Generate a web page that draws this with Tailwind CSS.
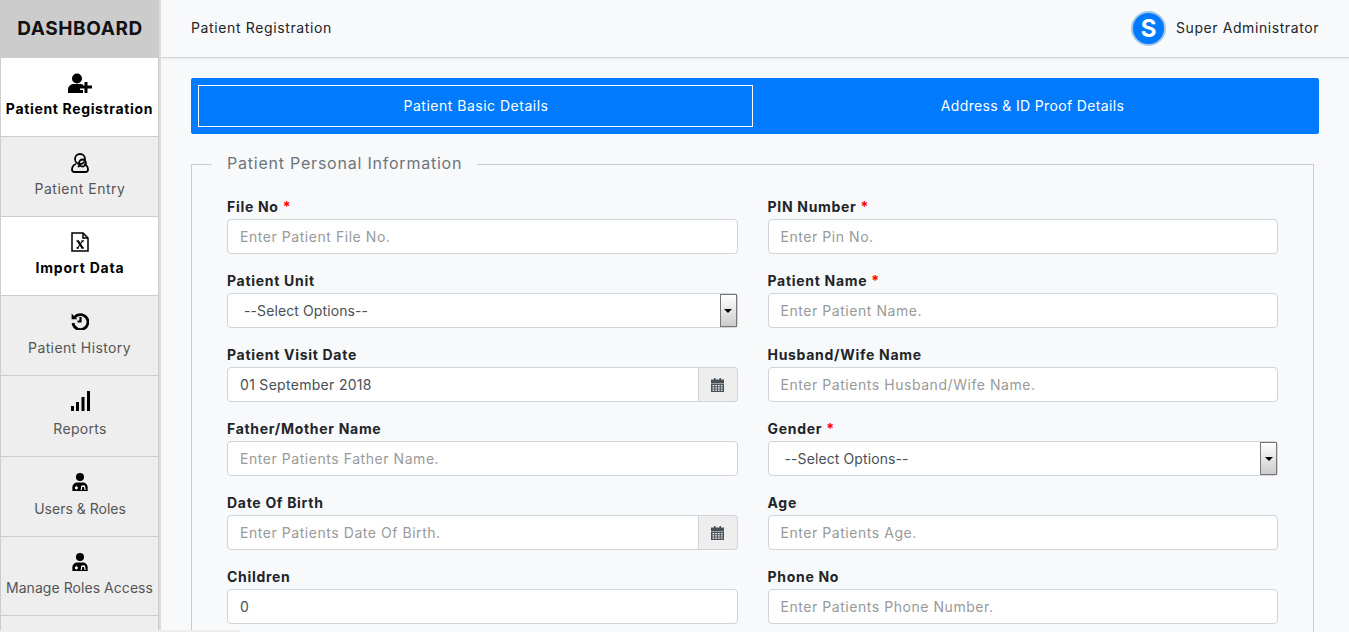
<!DOCTYPE html>
<html lang="en">
<head>
    <meta charset="UTF-8">
    <meta name="viewport" content="width=device-width, initial-scale=1.0">
    <title>Patient Registration</title>
    <script src="https://cdn.jsdelivr.net/npm/@tailwindcss/browser@4"></script>
</head>
<body class="h-[632px] overflow-hidden bg-[#f8f9fa] font-[Inter,sans-serif] text-[14px] tracking-[0.55px] text-[#212529]">
<div class="relative flex h-[632px] overflow-hidden">
    <!-- Sidebar -->
    <aside class="z-10 w-[161px] shrink-0 border-r-[2px] border-[#dcdcdc]">
        <div class="flex h-[58px] items-center justify-center bg-[#cccccc] pl-[1px] text-[19px] font-bold tracking-[0.6px] text-[#111]">DASHBOARD</div>
        <a class="flex h-[79px] flex-col items-center border-x border-b border-[#cccccc] bg-white pt-[15px] font-bold text-black">
            <svg class="h-[20px] w-[24px]" viewBox="0 0 24 20" fill="#000"><circle cx="9" cy="5.500" r="5"/><path d="M0 20v-3c0-3.500 2.500-6 5.500-6h7c1 0 1.800.2 2.500.6V13h-3v4h3v3z"/><path d="M16.500 9h3v3.500H24v3h-4.500V20h-3v-4.500H12v-3h4.500z"/></svg>
            <span class="mt-[7px] text-[14px] leading-[18px] tracking-[0.65px]">Patient Registration</span>
        </a>
        <a class="flex h-[80px] flex-col items-center border-x border-b border-[#cccccc] bg-[#eeeeee] pl-[1px] pt-[16px] text-[#555]">
            <svg class="h-[20px] w-[18px]" viewBox="0 0 18 20" fill="none" stroke="#000" stroke-width="1.800"><circle cx="9" cy="6" r="5"/><path d="M5 11c-2.500 1-4 3-4 5.500 0 1.500 1 2.500 2.500 2.500h11c1.500 0 2.500-1 2.500-2.500 0-2.500-1.500-4.500-4-5.500"/><circle cx="11.500" cy="10" r="3.500"/><path d="M7 14l2-2"/></svg>
            <span class="mt-[7px] leading-[18px] tracking-[0.5px]">Patient Entry</span>
        </a>
        <a class="flex h-[79px] flex-col items-center border-x border-b border-[#cccccc] bg-white pl-[1px] pt-[15px] font-bold tracking-[0.8px] text-black">
            <svg class="h-[20px] w-[18px]" viewBox="0 0 18 20" fill="none" stroke="#000" stroke-width="1.500"><path d="M1 1h11l5 5v13H1z"/><path d="M12 1v5h5"/><path d="M5.500 9h2.300M10.500 9h2.300M5.500 16h2.300M10.500 16h2.300M7 9l4.500 7" stroke-width="1.300"/><path d="M7 9l4.500 7" stroke-width="2.200"/><path d="M11.500 9l-5 7" stroke-width="1.200"/></svg>
            <span class="mt-[7px] leading-[18px]">Import Data</span>
        </a>
        <a class="flex h-[80px] flex-col items-center border-x border-b border-[#cccccc] bg-[#eeeeee] pt-[16px] tracking-[0.38px] text-[#555]">
            <svg class="h-[18px] w-[18px]" viewBox="0 0 18 18" fill="none" stroke="#000" stroke-width="2.800"><path d="M3.500 5.500A7.500 7.500 0 1 1 2 11"/><path d="M.6 1.500v5.700h5.700L.6 1.500z" fill="#000" stroke="none"/><path d="M9.500 5v4.500H6.500" stroke-width="2.200"/></svg>
            <span class="mt-[9px] leading-[18px]">Patient History</span>
        </a>
        <a class="flex h-[81px] flex-col items-center border-x border-b border-[#cccccc] bg-[#eeeeee] pl-[1px] pt-[15px] tracking-[0.3px] text-[#555]">
            <svg class="h-[20px] w-[19px]" viewBox="0 0 19 20" fill="#000"><path d="M0 15h3v5H0zM5 11h3v9H5zM10.500 6h3v14h-3zM16 0h3v20h-3z"/></svg>
            <span class="mt-[9px] leading-[18px]">Reports</span>
        </a>
        <a class="flex h-[80px] flex-col items-center border-x border-b border-[#cccccc] bg-[#eeeeee] pl-[1px] pt-[16px] tracking-[0px] text-[#555]">
            <svg class="h-[18px] w-[16px]" viewBox="0 0 17 20" fill="#000"><circle cx="8.500" cy="4.500" r="4.500"/><path d="M0 20v-4c0-3 2-5 4.500-5.500h8C15 11 17 13 17 16v4z"/><circle cx="4.500" cy="16.500" r="1.700" fill="#fff"/><path d="M10 14h4l.8 5h-1.300l-.5-3.500h-2L10.500 19H9.200z" fill="#fff"/></svg>
            <span class="mt-[9px] leading-[18px]">Users &amp; Roles</span>
        </a>
        <a class="flex h-[79px] flex-col items-center border-x border-b border-[#cccccc] bg-[#eeeeee] pt-[16px] tracking-[0.05px] text-[#555]">
            <svg class="h-[18px] w-[16px]" viewBox="0 0 17 20" fill="#000"><circle cx="8.500" cy="4.500" r="4.500"/><path d="M0 20v-4c0-3 2-5 4.500-5.500h8C15 11 17 13 17 16v4z"/><circle cx="4.500" cy="16.500" r="1.700" fill="#fff"/><path d="M10 14h4l.8 5h-1.300l-.5-3.500h-2L10.500 19H9.200z" fill="#fff"/></svg>
            <span class="mt-[8px] whitespace-nowrap leading-[18px]">Manage Roles Access</span>
        </a>
        <div class="h-[20px] border-x border-[#cccccc] bg-[#eeeeee]"></div>
    </aside>

    <div class="min-w-0 flex-1">
        <!-- Top bar -->
        <header class="flex h-[58px] items-center justify-between border-b border-[#d6d6d6] pl-[30px] pr-[30px] shadow-[0_1px_2px_rgba(0,0,0,0.08)]">
            <span class="pb-[2px] tracking-[0.63px]">Patient Registration</span>
            <div class="flex items-center gap-[10px]">
                <span class="flex h-[35px] w-[35px] items-center justify-center rounded-full border-[2px] border-[#a3c6e6] bg-[#007bff] text-[24px] font-bold tracking-normal text-white">S</span>
                <span class="pb-[2px] tracking-[0.58px]">Super Administrator</span>
            </div>
        </header>

        <main class="pl-[30px] pr-[30px] pt-[20px]">
            <!-- Tabs -->
            <div class="flex h-[56px] rounded-[2px] bg-[#007bff] p-[7px] text-white">
                <button class="w-[555px] border border-white pb-[2px] pl-[1px] tracking-[0.5px]">Patient Basic Details</button>
                <button class="flex-1 pb-[2px] tracking-[0.35px]">Address &amp; ID Proof Details</button>
            </div>

            <fieldset class="mr-[5px] mt-[20px] border border-[#cccccc] px-[35px] pb-[20px]">
                <legend class="ml-[-15px] px-[15px] pb-[2px] text-[16px] leading-[19px] tracking-[0.78px] text-[#6c757d]">Patient Personal Information</legend>
                <div class="mt-[23px] grid grid-cols-2 gap-x-[30px] gap-y-[18px]">
                    <div>
                        <label class="mb-[4px] block font-bold leading-[17px] tracking-[0.7px]">File No <span class="text-[#ff0000]">*</span></label>
                        <input class="h-[35px] w-full rounded-[4px] border border-[#ced4da] bg-white px-[12px] placeholder:text-[#999]" placeholder="Enter Patient File No.">
                    </div>
                    <div>
                        <label class="mb-[4px] block font-bold leading-[17px] tracking-[0.7px]">PIN Number <span class="text-[#ff0000]">*</span></label>
                        <input class="h-[35px] w-full rounded-[4px] border border-[#ced4da] bg-white px-[12px] placeholder:text-[#999]" placeholder="Enter Pin No.">
                    </div>
                    <div>
                        <label class="mb-[4px] block font-bold leading-[17px] tracking-[0.7px]">Patient Unit</label>
                        <div class="relative h-[35px]">
                            <select class="h-full w-full appearance-none rounded-[4px] border border-[#ced4da] bg-white pl-[16px] tracking-[0.1px] text-[#495057]"><option>--Select Options--</option></select>
                            <span class="absolute right-[1px] top-[1px] flex h-[33px] w-[17px] items-center justify-center border border-[#767676] bg-gradient-to-b from-white to-[#cccccc]"><span class="h-0 w-0 border-x-[4px] border-t-[4px] border-x-transparent border-t-black"></span></span>
                        </div>
                    </div>
                    <div>
                        <label class="mb-[4px] block font-bold leading-[17px] tracking-[0.7px]">Patient Name <span class="text-[#ff0000]">*</span></label>
                        <input class="h-[35px] w-full rounded-[4px] border border-[#ced4da] bg-white px-[12px] placeholder:text-[#999]" placeholder="Enter Patient Name.">
                    </div>
                    <div>
                        <label class="mb-[4px] block font-bold leading-[17px] tracking-[0.7px]">Patient Visit Date</label>
                        <div class="flex h-[35px]">
                            <input class="h-full min-w-0 flex-1 rounded-l-[4px] border border-[#ced4da] bg-white px-[12px] tracking-[0.3px] text-[#495057]" value="01 September 2018">
                            <span class="flex w-[39px] items-center justify-center rounded-r-[4px] border border-l-0 border-[#ced4da] bg-[#eeeeee]">
                                <svg class="h-[14px] w-[13px]" viewBox="0 0 13 14" fill="#495057"><path d="M3 0h1.500v2H3zM8.500 0H10v2H8.500zM0 1.500h13V5H0zM0 5.500h13V14H0z"/><path d="M1.500 7h1.800v1.300H1.500zM4.300 7h1.800v1.300H4.300zM7 7h1.800v1.300H7zM9.800 7h1.800v1.300H9.800zM1.500 9.200h1.800v1.300H1.500zM4.300 9.200h1.800v1.300H4.300zM7 9.200h1.800v1.300H7zM9.800 9.200h1.800v1.300H9.800zM1.500 11.400h1.800v1.300H1.500zM4.300 11.400h1.800v1.300H4.300zM7 11.400h1.800v1.300H7zM9.800 11.400h1.800v1.300H9.800z" fill="#eeeeee"/></svg>
                            </span>
                        </div>
                    </div>
                    <div>
                        <label class="mb-[4px] block font-bold leading-[17px] tracking-[0.7px]">Husband/Wife Name</label>
                        <input class="h-[35px] w-full rounded-[4px] border border-[#ced4da] bg-white px-[12px] placeholder:text-[#999]" placeholder="Enter Patients Husband/Wife Name.">
                    </div>
                    <div>
                        <label class="mb-[4px] block font-bold leading-[17px] tracking-[0.7px]">Father/Mother Name</label>
                        <input class="h-[35px] w-full rounded-[4px] border border-[#ced4da] bg-white px-[12px] placeholder:text-[#999]" placeholder="Enter Patients Father Name.">
                    </div>
                    <div>
                        <label class="mb-[4px] block font-bold leading-[17px] tracking-[0.7px]">Gender <span class="text-[#ff0000]">*</span></label>
                        <div class="relative h-[35px]">
                            <select class="h-full w-full appearance-none rounded-[4px] border border-[#ced4da] bg-white pl-[16px] tracking-[0.1px] text-[#495057]"><option>--Select Options--</option></select>
                            <span class="absolute right-[1px] top-[1px] flex h-[33px] w-[17px] items-center justify-center border border-[#767676] bg-gradient-to-b from-white to-[#cccccc]"><span class="h-0 w-0 border-x-[4px] border-t-[4px] border-x-transparent border-t-black"></span></span>
                        </div>
                    </div>
                    <div>
                        <label class="mb-[4px] block font-bold leading-[17px] tracking-[0.7px]">Date Of Birth</label>
                        <div class="flex h-[35px]">
                            <input class="h-full min-w-0 flex-1 rounded-l-[4px] border border-[#ced4da] bg-white px-[12px] placeholder:text-[#999]" placeholder="Enter Patients Date Of Birth.">
                            <span class="flex w-[39px] items-center justify-center rounded-r-[4px] border border-l-0 border-[#ced4da] bg-[#eeeeee]">
                                <svg class="h-[14px] w-[13px]" viewBox="0 0 13 14" fill="#495057"><path d="M3 0h1.500v2H3zM8.500 0H10v2H8.500zM0 1.500h13V5H0zM0 5.500h13V14H0z"/><path d="M1.500 7h1.800v1.300H1.500zM4.300 7h1.800v1.300H4.300zM7 7h1.800v1.300H7zM9.800 7h1.800v1.300H9.800zM1.500 9.200h1.800v1.300H1.500zM4.300 9.200h1.800v1.300H4.300zM7 9.200h1.800v1.300H7zM9.800 9.200h1.800v1.300H9.800zM1.500 11.400h1.800v1.300H1.500zM4.300 11.400h1.800v1.300H4.300zM7 11.400h1.800v1.300H7zM9.800 11.400h1.800v1.300H9.800z" fill="#eeeeee"/></svg>
                            </span>
                        </div>
                    </div>
                    <div>
                        <label class="mb-[4px] block font-bold leading-[17px] tracking-[0.7px]">Age</label>
                        <input class="h-[35px] w-full rounded-[4px] border border-[#ced4da] bg-white px-[12px] placeholder:text-[#999]" placeholder="Enter Patients Age.">
                    </div>
                    <div>
                        <label class="mb-[4px] block font-bold leading-[17px] tracking-[0.7px]">Children</label>
                        <input class="h-[35px] w-full rounded-[4px] border border-[#ced4da] bg-white px-[12px] text-[#495057]" value="0">
                    </div>
                    <div>
                        <label class="mb-[4px] block font-bold leading-[17px] tracking-[0.7px]">Phone No</label>
                        <input class="h-[35px] w-full rounded-[4px] border border-[#ced4da] bg-white px-[12px] placeholder:text-[#999]" placeholder="Enter Patients Phone Number.">
                    </div>
                </div>
            </fieldset>
        </main>
    </div>

    <!-- stray strip along the bottom edge -->
    <div class="absolute bottom-0 left-0 z-20 h-[2px] w-[240px] bg-[#eeeeee]"></div>
</div>
</body>
</html>
